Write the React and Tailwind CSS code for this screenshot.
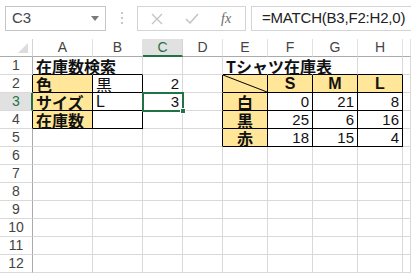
import React from "react";

const COLS = ["A", "B", "C", "D", "E", "F", "G", "H", "I"];
const Y = "bg-[#ffe699]";

function inBox(r, c) {
  if (r >= 2 && r <= 4 && c >= 0 && c <= 1) return true;
  if (r >= 2 && r <= 5 && c >= 4 && c <= 7) return true;
  return false;
}

const data = {
  "1-0": { t: "在庫数検索", b: true, over: true },
  "1-4": { t: "Tシャツ在庫表", b: true, over: true },
  "2-0": { t: "色", b: true, y: true },
  "2-1": { t: "黒" },
  "2-2": { t: "2", n: true },
  "3-0": { t: "サイズ", b: true, y: true },
  "3-1": { t: "L", latin: true },
  "3-2": { t: "3", n: true, sel: true },
  "4-0": { t: "在庫数", b: true, y: true },
  "2-4": { y: true, diag: true },
  "2-5": { t: "S", b: true, y: true, c: true, latin: true },
  "2-6": { t: "M", b: true, y: true, c: true, latin: true },
  "2-7": { t: "L", b: true, y: true, c: true, latin: true },
  "3-4": { t: "白", b: true, y: true, c: true },
  "4-4": { t: "黒", b: true, y: true, c: true },
  "5-4": { t: "赤", b: true, y: true, c: true },
  "3-5": { t: "0", n: true },
  "3-6": { t: "21", n: true },
  "3-7": { t: "8", n: true },
  "4-5": { t: "25", n: true },
  "4-6": { t: "6", n: true },
  "4-7": { t: "16", n: true },
  "5-5": { t: "18", n: true },
  "5-6": { t: "15", n: true },
  "5-7": { t: "4", n: true },
};

const hiddenRight = { "1-0": true, "1-4": true, "1-5": true };

function Cell({ r, c }) {
  const d = data[`${r}-${c}`] || {};
  const rightBlack = inBox(r, c) || inBox(r, c + 1);
  const bottomBlack = inBox(r, c) || inBox(r + 1, c);
  const rb = hiddenRight[`${r}-${c}`]
    ? "border-r-transparent"
    : rightBlack
    ? "border-r-black"
    : "border-r-[#d9d9d9]";
  const bb = bottomBlack ? "border-b-black" : "border-b-[#d9d9d9]";
  const bg = d.y ? Y : "bg-white";
  let textCls = "";
  if (d.n) textCls = "justify-end pr-[3px] font-['Liberation_Sans',sans-serif] text-[15px] text-[#111]";
  else if (d.c) textCls = "justify-center text-[16px] text-[#111]";
  else textCls = "justify-start pl-[3px] text-[16px] text-[#111]";
  const font = d.n
    ? ""
    : d.latin
    ? "font-['Liberation_Sans','Noto_Sans_CJK_JP',sans-serif]"
    : "font-['Noto_Sans_CJK_JP',sans-serif]";
  return (
    <div className={`relative flex h-[18px] items-center border-r border-b ${rb} ${bb} ${bg} ${textCls} ${font}`}>
      {d.diag && (
        <svg className="absolute inset-0" width="44" height="17" viewBox="0 0 44 17">
          <line x1="0" y1="0" x2="44" y2="17" stroke="#000" strokeWidth="1" />
        </svg>
      )}
      {d.t && (
        <span className={`relative z-10 whitespace-nowrap leading-[18px] ${d.b ? "font-bold" : ""}`}>{d.t}</span>
      )}
      {d.sel && (
        <div className="absolute left-[-1px] top-[-1px] z-20 h-[20px] w-[42px] border-2 border-[#217346]">
          <div className="absolute right-[-4px] bottom-[-4px] h-[6px] w-[6px] border border-white bg-[#217346]" />
        </div>
      )}
    </div>
  );
}

export default function App() {
  const rows = Array.from({ length: 12 }, (_, i) => i + 1);
  return (
    <div className="h-[274px] w-[411px] overflow-hidden bg-white font-['Liberation_Sans',sans-serif]">
      {/* formula bar */}
      <div className="flex h-[39px] items-start pt-[6px]">
        <div className="ml-[5px] flex h-[25px] w-[101px] items-center justify-between border border-[#c6c6c6] pl-[6px] pr-[6px]">
          <span className="text-[15px] text-[#444]">C3</span>
          <svg width="8" height="5" viewBox="0 0 8 5">
            <path d="M0 0 L8 0 L4 5 Z" fill="#7a7a7a" />
          </svg>
        </div>
        <div className="ml-[15px] mt-[6px] flex w-[2px] flex-col gap-[3px]">
          <div className="h-[2px] w-[2px] bg-[#c8c8c8]" />
          <div className="h-[2px] w-[2px] bg-[#c8c8c8]" />
          <div className="h-[2px] w-[2px] bg-[#c8c8c8]" />
        </div>
        <div className="ml-[14px] flex h-[25px] w-[109px] items-center border border-[#d4d4d4]">
          <svg className="ml-[13px]" width="12" height="12" viewBox="0 0 12 12">
            <path d="M1 1 L11 11 M11 1 L1 11" stroke="#c3c3c3" strokeWidth="1.3" />
          </svg>
          <svg className="ml-[22px]" width="14" height="11" viewBox="0 0 14 11">
            <path d="M1 6 L5 10 L13 1" stroke="#c3c3c3" strokeWidth="1.5" fill="none" />
          </svg>
          <span className="ml-[22px] font-['Liberation_Serif',serif] text-[14px] italic text-[#6a6a6a]">fx</span>
        </div>
        <div className="ml-[5px] flex h-[25px] flex-1 items-center border border-r-0 border-[#d4d4d4] pl-[10px]">
          <span className="text-[15px] tracking-[-0.2px] text-[#222]">=MATCH(B3,F2:H2,0)</span>
        </div>
      </div>
      {/* grid */}
      <div className="grid grid-cols-[33px_60px_50px_40px_40px_45px_45px_45px_45px_8px]">
        {/* header row */}
        <div className="relative h-[18px] border-r border-b border-r-[#d4d4d4] border-b-[#ababab] bg-white">
          <svg className="absolute right-[4px] bottom-[3px]" width="10" height="10" viewBox="0 0 10 10">
            <path d="M10 0 L10 10 L0 10 Z" fill="#dcdcdc" />
          </svg>
        </div>
        {COLS.map((l, i) =>
          i === 2 ? (
            <div key={l} className="flex h-[18px] items-center justify-center border-r border-b-2 border-r-[#d4d4d4] border-b-[#217346] bg-[#e1e1e1] text-[14px] text-[#217346]">
              {l}
            </div>
          ) : (
            <div key={l} className="flex h-[18px] items-center justify-center border-r border-b border-r-[#e1e1e1] border-b-[#ababab] bg-white text-[14px] text-[#444]">
              {i < 8 ? l : ""}
            </div>
          )
        )}
        {rows.map((r) => (
          <React.Fragment key={r}>
            {r === 3 ? (
              <div className="flex h-[18px] items-center justify-center border-r-2 border-b border-r-[#217346] border-b-[#d9d9d9] bg-[#e1e1e1] pl-[1px] text-[14px] text-[#217346]">
                {r}
              </div>
            ) : (
              <div className={`flex h-[18px] items-center justify-center border-r border-b border-b-[#d9d9d9] bg-white text-[14px] text-[#444] ${r === 2 || r === 4 ? "border-r-black" : "border-r-[#ababab]"}`}>
                {r}
              </div>
            )}
            {COLS.map((l, c) => (
              <Cell key={l} r={r} c={c} />
            ))}
          </React.Fragment>
        ))}
      </div>
    </div>
  );
}
